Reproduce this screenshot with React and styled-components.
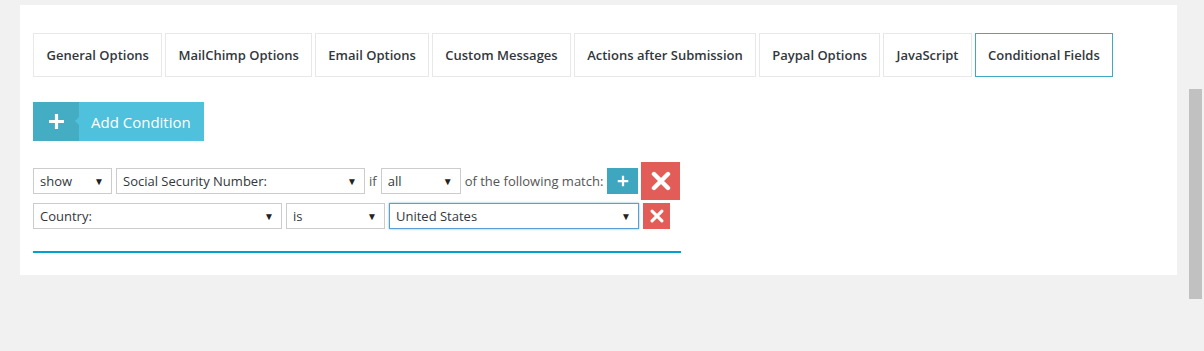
import React from 'react'
import styled, { createGlobalStyle } from 'styled-components';

const GlobalStyle = createGlobalStyle`
  html, body {
    margin: 0;
    padding: 0;
    background: #f1f1f1;
    font-family: "Open Sans", "Liberation Sans", sans-serif;
  }
`

const tabs = [
    'General Options',
    'MailChimp Options',
    'Email Options',
    'Custom Messages',
    'Actions after Submission',
    'Paypal Options',
    'JavaScript',
    'Conditional Fields',
]

function PlusIcon({ size = 17, weight = 3 }) {
    return (
        <svg width={size} height={size} viewBox="0 0 16 16">
            <path d="M8 1v14M1 8h14" stroke="#fff" strokeWidth={weight} fill="none" />
        </svg>
    )
}

function CrossIcon({ size = 20 }) {
    return (
        <svg width={size} height={size} viewBox="0 0 20 20">
            <path d="M3 3L17 17M17 3L3 17" stroke="#fff" strokeWidth="4.4" strokeLinecap="round" fill="none" />
        </svg>
    )
}

function Select({ width, focused, children }) {
    return (
        <SelectBox $width={width} $focused={focused}>
            <span>{children}</span>
            <Arrow>▼</Arrow>
        </SelectBox>
    )
}

function App() {
    return (
        <>
            <GlobalStyle />
            <Page>
                <Panel>
                    <TabBar>
                        {tabs.map((t) => (
                            <Tab key={t} $active={t === 'Conditional Fields'}>{t}</Tab>
                        ))}
                    </TabBar>

                    <AddButton>
                        <AddIcon><PlusIcon /></AddIcon>
                        <AddLabel>Add Condition</AddLabel>
                    </AddButton>

                    <Conditions>
                        <Row>
                            <Select width={79}>show</Select>
                            <Select width={249}>Social Security Number:</Select>
                            <Label>if</Label>
                            <Select width={80}>all</Select>
                            <Label>of the following match:</Label>
                            <SmallPlus><PlusIcon size={12} weight={3} /></SmallPlus>
                            <DeleteButton $size={39}><CrossIcon size={20} /></DeleteButton>
                        </Row>
                        <Row>
                            <Select width={249}>Country:</Select>
                            <Select width={99}>is</Select>
                            <Select width={250} focused>United States</Select>
                            <DeleteButton $size={27} $small><CrossIcon size={14} /></DeleteButton>
                        </Row>
                    </Conditions>

                    <Divider />
                </Panel>
                <Scrollbar />
            </Page>
        </>
    )
}

const Page = styled.div`
  display: flex;
  align-items: flex-start;
  padding: 5px 2px 0 20px;
  height: 346px;
`

const Panel = styled.section`
  width: 1157px;
  box-sizing: border-box;
  background: #fff;
  padding: 28px 13px 22px 13px;
`

const TabBar = styled.div`
  display: flex;
  gap: 3px;
`

const Tab = styled.div`
  height: 44px;
  box-sizing: border-box;
  display: flex;
  align-items: center;
  padding: 0 12px 0 12.5px;
  border: 1px solid ${(p) => (p.$active ? '#3fa9c3' : '#e8e8e8')};
  font-size: 13px;
  font-weight: 600;
  color: #32373c;
  white-space: nowrap;
`

const AddButton = styled.div`
  display: inline-flex;
  height: 39px;
  margin-top: 25px;
  cursor: pointer;
`

const AddIcon = styled.div`
  width: 46px;
  display: flex;
  align-items: center;
  justify-content: center;
  background: #44adc4;
`

const AddLabel = styled.div`
  position: relative;
  display: flex;
  align-items: center;
  padding: 0 13px 0 12px;
  background: #4fc1dc;
  color: #fff;
  font-size: 15px;

  &::before {
    content: '';
    position: absolute;
    left: -4px;
    top: 15px;
    border-style: solid;
    border-width: 4px 4px 4px 0;
    border-color: transparent #4fc1dc transparent transparent;
  }
`

const Conditions = styled.div`
  display: flex;
  flex-direction: column;
  gap: 3px;
  margin-top: 21px;
`

const Row = styled.div`
  display: flex;
  align-items: center;
  gap: 4px;
`

const SelectBox = styled.div`
  width: ${(p) => p.$width}px;
  height: 26px;
  box-sizing: border-box;
  display: flex;
  align-items: center;
  justify-content: space-between;
  padding: 0 7px 0 6px;
  border: 1px solid ${(p) => (p.$focused ? '#5b9dd9' : '#ccc')};
  box-shadow: ${(p) => (p.$focused ? '0 0 2px rgba(30,140,190,.6)' : 'none')};
  background: #fff;
  font-size: 13px;
  color: #32373c;
`

const Arrow = styled.span`
  font-size: 10px;
  color: #222;
  line-height: 1;
`

const Label = styled.span`
  font-size: 13px;
  color: #555;
`

const SmallPlus = styled.div`
  width: 31px;
  height: 26px;
  display: flex;
  align-items: center;
  justify-content: center;
  background: #3ea7bf;
`

const DeleteButton = styled.div`
  width: ${(p) => p.$size}px;
  height: ${(p) => p.$size - 1}px;
  margin-left: ${(p) => (p.$small ? '0' : '-1px')};
  display: flex;
  align-items: center;
  justify-content: center;
  background: #e35d58;
`

const Divider = styled.div`
  width: 648px;
  height: 2px;
  margin-top: 22px;
  background: #00a0d2;
`

const Scrollbar = styled.div`
  width: 13px;
  height: 210px;
  margin: 84px 0 0 12px;
  background: #c1c1c1;
`

export default App
